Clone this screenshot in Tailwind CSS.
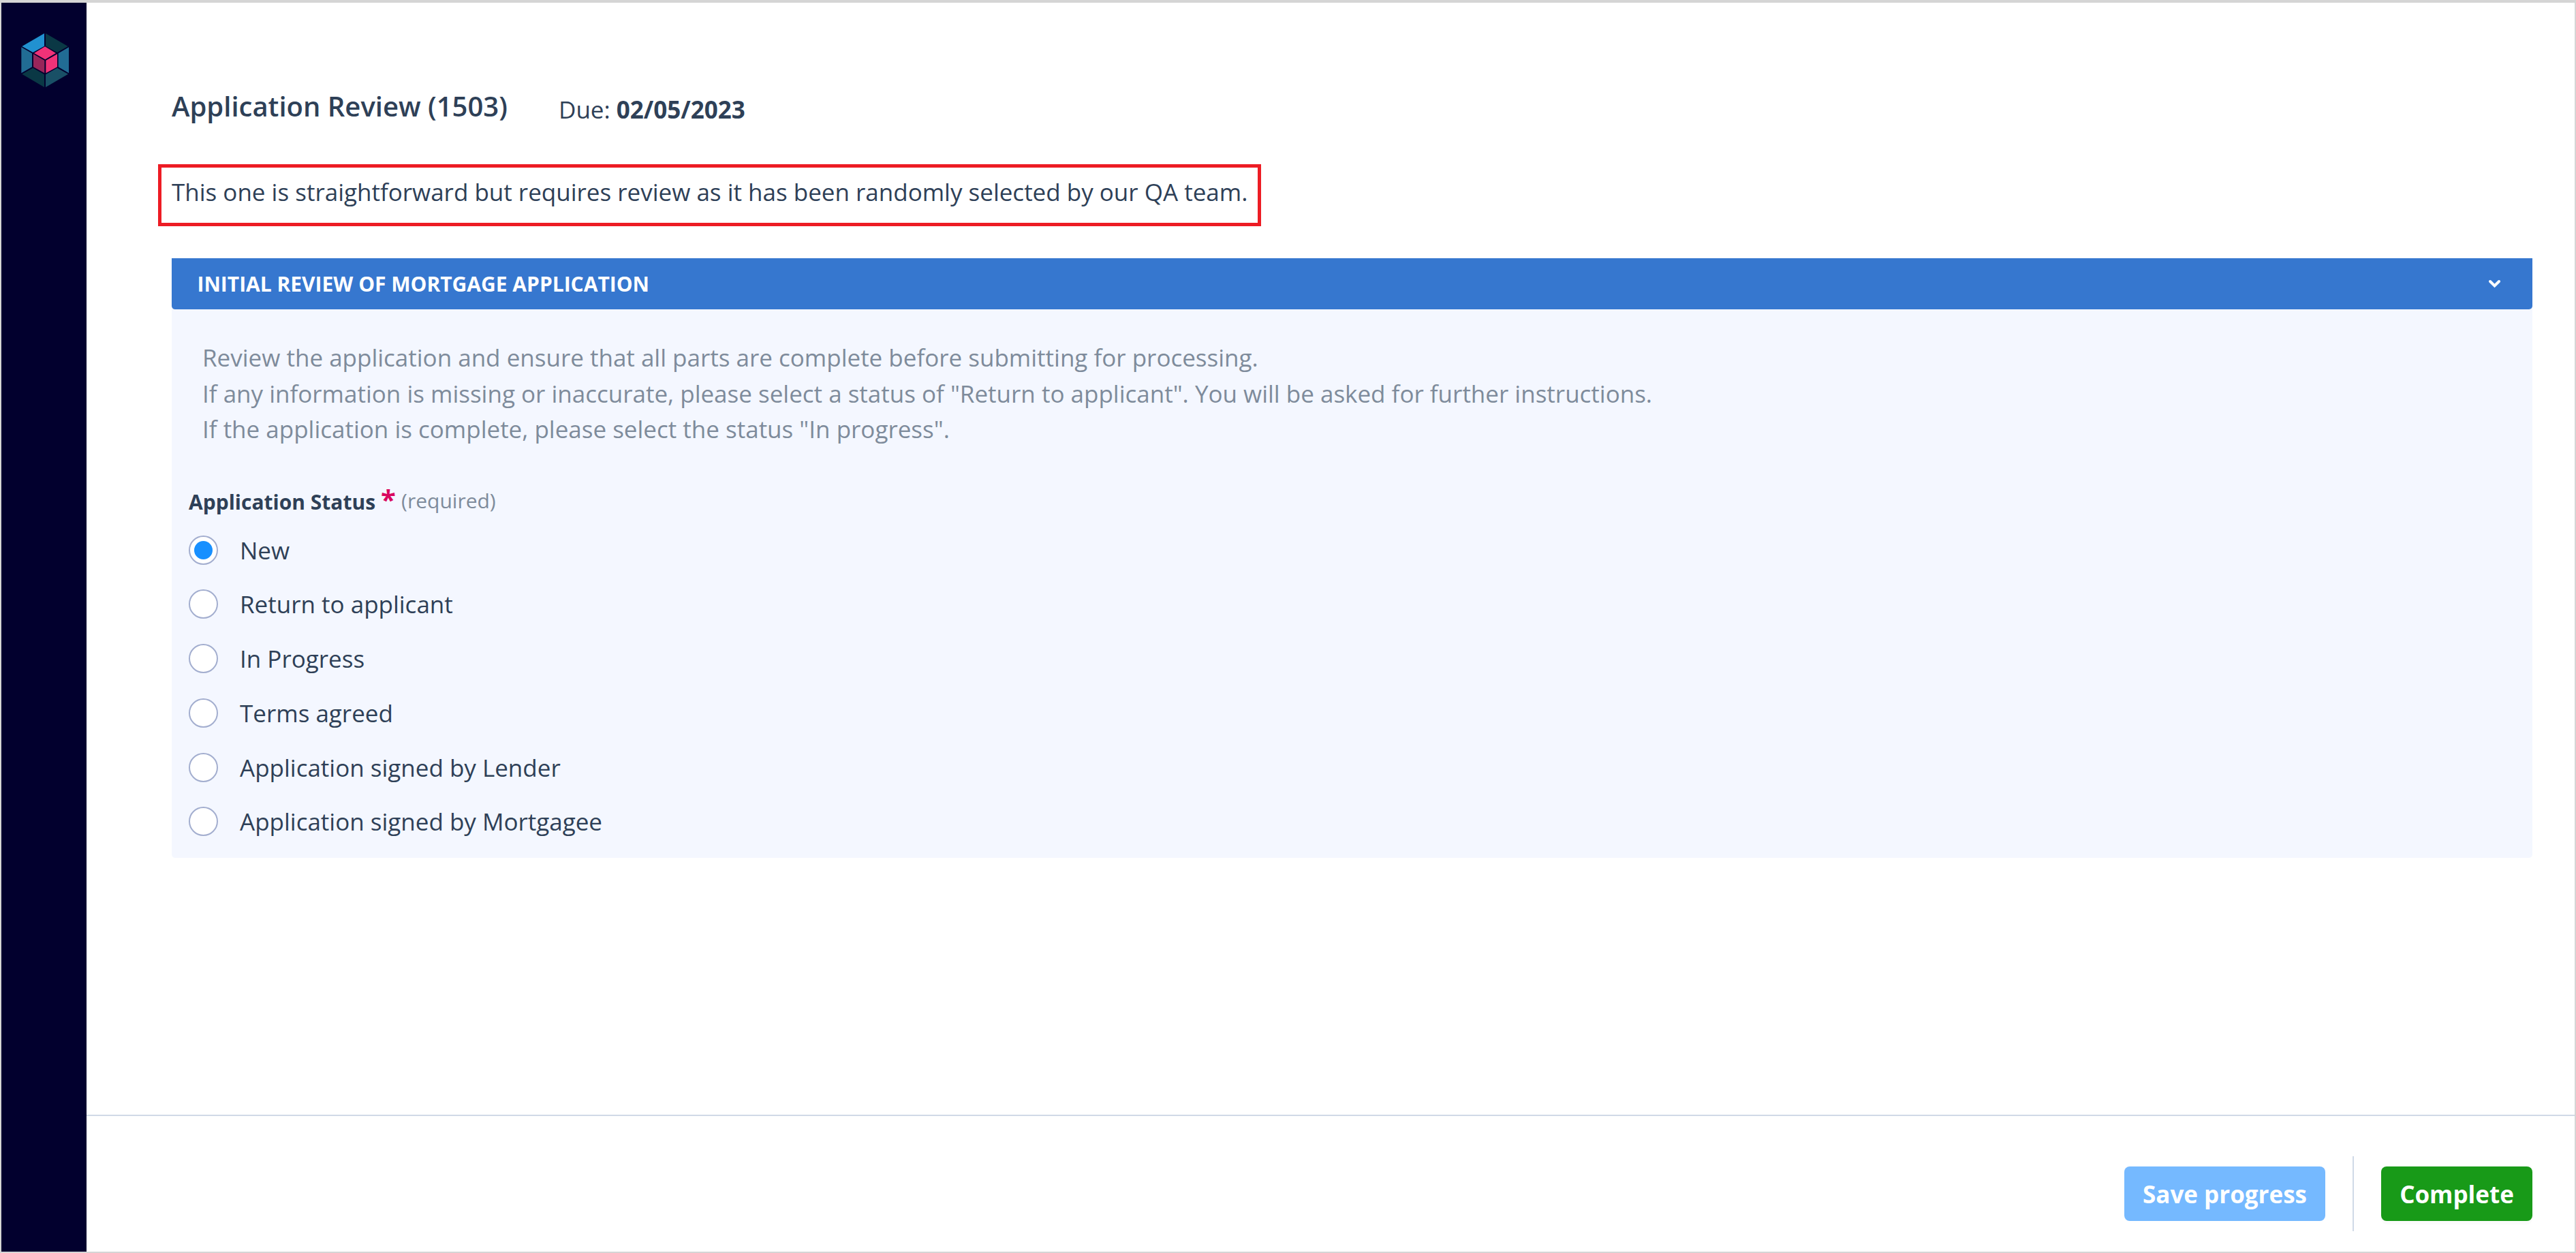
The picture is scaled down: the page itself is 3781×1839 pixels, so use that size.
<!DOCTYPE html>
<html lang="en">
  <head>
    <meta charset="UTF-8" />
    <meta name="viewport" content="width=device-width, initial-scale=1.0" />
    <title>Application Review (1503)</title>
    <script src="https://cdn.jsdelivr.net/npm/@tailwindcss/browser@4"></script>
  </head>
  <body class="bg-white text-[#2e4057] font-['Open_Sans',sans-serif] text-[35px] leading-[53px]">
    <div class="flex w-full h-screen overflow-hidden border-2 border-t-4 border-[#d5d5d5]">
      <!-- Sidebar -->
      <aside class="w-[125px] shrink-0 bg-[#02002e] pt-[45px] pl-[29px]">
        <svg class="w-[70px] h-[79px]" viewBox="93 147 210 237">
          <path fill="#2191d0" d="M195 147V203L145 231L97 204Z" />
          <path fill="#0a3845" d="M201 147L299 204L252 231L201 203Z" />
          <path fill="#216c94" d="M94 208L141 235V295L94 322Z" />
          <path fill="#216c94" d="M303 208L257 235V295L303 322Z" />
          <path fill="#0a3845" d="M97 326L145 299L195 328V384Z" />
          <path fill="#195066" d="M201 384V328L252 299L300 326Z" />
          <path fill="#f03278" d="M198 205L246 234L199 262L150 234Z" />
          <path fill="#98255a" d="M147 238L196 266V322L147 295Z" />
          <path fill="#f03278" d="M252 238V295L202 322V266Z" />
        </svg>
      </aside>

      <div class="flex flex-col flex-1">
        <main class="flex-1 pt-[122px] pl-[125px] pr-[62px]">
          <!-- Title -->
          <header class="flex h-[60px]">
            <h1 class="w-[568px] text-[40px] leading-[60px] font-semibold whitespace-nowrap">Application Review (1503)</h1>
            <p class="pt-2 whitespace-nowrap">Due: <span class="font-bold">02/05/2023</span></p>
          </header>

          <p class="mt-[55px] -ml-5 w-[1619px] h-[91px] border-5 border-[#ed1c24] pt-[9px] pl-[15px] whitespace-nowrap">
            This one is straightforward but requires review as it has been randomly selected by our QA team.
          </p>

          <!-- Review section -->
          <section class="mt-[47px] h-[880px] bg-[#f4f7ff] rounded-b-[5px]">
            <div class="flex items-center justify-between h-[75px] bg-[#3677cf] rounded-b-[5px] pl-[37.5px] pr-[46px] text-white">
              <h2 class="text-[30px] leading-[45px] font-bold">INITIAL REVIEW OF MORTGAGE APPLICATION</h2>
              <svg class="w-[19px] h-[13px]" viewBox="0 0 19 13" fill="none" stroke="currentColor" stroke-width="4" stroke-linecap="round">
                <path d="M3 3L9.5 9.5L16 3" />
              </svg>
            </div>

            <div class="pt-[45px] pl-[45px] text-[#7e8b9b] leading-[52.5px]">
              <p>Review the application and ensure that all parts are complete before submitting for processing.</p>
              <p>If any information is missing or inaccurate, please select a status of "Return to applicant". You will be asked for further instructions.</p>
              <p>If the application is complete, please select the status "In progress".</p>
            </div>

            <fieldset class="pl-[25px] mt-[57px]">
              <div class="flex h-[45px] text-[30px] leading-[45px]">
                <span class="font-bold">Application Status</span>
                <span class="-mt-1 ml-2 w-[30px] text-[40px] font-bold text-[#d9085f]">*</span>
                <span class="-mt-0.5 text-[#7e8b9b]">(required)</span>
              </div>

              <div class="flex flex-col gap-[26.8px] mt-[22px]">
                <label class="flex items-center gap-8">
                  <span class="flex items-center justify-center size-[43px] rounded-full border-2 border-[#a3aecf] bg-white">
                    <span class="size-[27px] rounded-full bg-[#1890ff]"></span>
                  </span>
                  New
                </label>
                <label class="flex items-center gap-8">
                  <span class="size-[43px] rounded-full border-2 border-[#a3aecf] bg-white"></span>
                  Return to applicant
                </label>
                <label class="flex items-center gap-8">
                  <span class="size-[43px] rounded-full border-2 border-[#a3aecf] bg-white"></span>
                  In Progress
                </label>
                <label class="flex items-center gap-8">
                  <span class="size-[43px] rounded-full border-2 border-[#a3aecf] bg-white"></span>
                  Terms agreed
                </label>
                <label class="flex items-center gap-8">
                  <span class="size-[43px] rounded-full border-2 border-[#a3aecf] bg-white"></span>
                  Application signed by Lender
                </label>
                <label class="flex items-center gap-8">
                  <span class="size-[43px] rounded-full border-2 border-[#a3aecf] bg-white"></span>
                  Application signed by Mortgagee
                </label>
              </div>
            </fieldset>
          </section>
        </main>

        <!-- Footer actions -->
        <footer class="flex items-start justify-end h-[201px] border-t-2 border-[#d0d9e7] pt-[59px] pr-[62px]">
          <button class="mt-[15px] w-[295px] h-20 rounded-[8px] bg-[#75b9ff] font-bold text-white">Save progress</button>
          <div class="ml-10 mr-10 w-0.5 h-[110px] bg-[#d0d9e7]"></div>
          <button class="mt-[15px] w-[222px] h-20 rounded-[8px] bg-[#189a18] font-bold text-white shadow-[0_5px_0_rgba(0,0,0,0.015)]">Complete</button>
        </footer>
      </div>
    </div>
  </body>
</html>
